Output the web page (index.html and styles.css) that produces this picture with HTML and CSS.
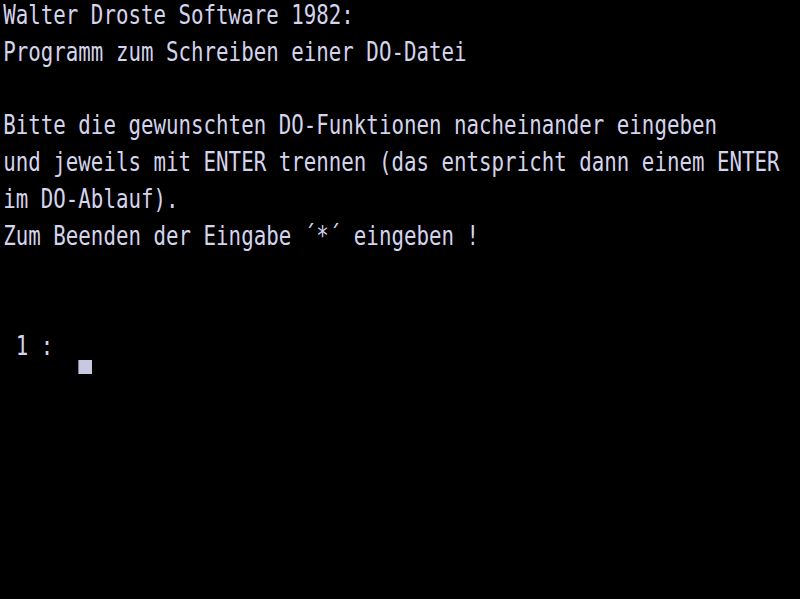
FILE: index.html
```html
<!DOCTYPE html>
<html lang="de">
<head>
<meta charset="utf-8">
<title>DO-Datei</title>
<link rel="stylesheet" href="styles.css">
</head>
<body>
<div class="frame">
<div class="screen">
<div class="row">Walter Droste Software 1982:</div>
<div class="row">Programm zum Schreiben einer DO-Datei</div>
<div class="row"></div>
<div class="row">Bitte die gewunschten DO-Funktionen nacheinander eingeben</div>
<div class="row">und jeweils mit ENTER trennen (das entspricht dann einem ENTER</div>
<div class="row">im DO-Ablauf).</div>
<div class="row">Zum Beenden der Eingabe ´*´ eingeben !</div>
<div class="row"></div>
<div class="row"></div>
<div class="row"> 1 :  <span class="cursor"></span></div>
</div>
</div>
</body>
</html>
```

FILE: styles.css
```css
html, body {
  margin: 0;
  padding: 0;
  background: #000;
}
.frame {
  width: 800px;
  height: 599px;
  overflow: hidden;
  background: #000;
}
.screen {
  width: 1000px;
  padding-left: 4px;
  box-sizing: border-box;
  transform: scaleX(0.8);
  transform-origin: 0 0;
  font-family: "DejaVu Sans Mono", monospace;
  font-size: 26px;
  line-height: 31px;
  color: #d4d4ec;
}
.row {
  height: 36.8px;
  white-space: pre;
}
.cursor {
  display: inline-block;
  width: 17px;
  height: 14px;
  background: #c8c8e0;
  vertical-align: -19px;
}
```
